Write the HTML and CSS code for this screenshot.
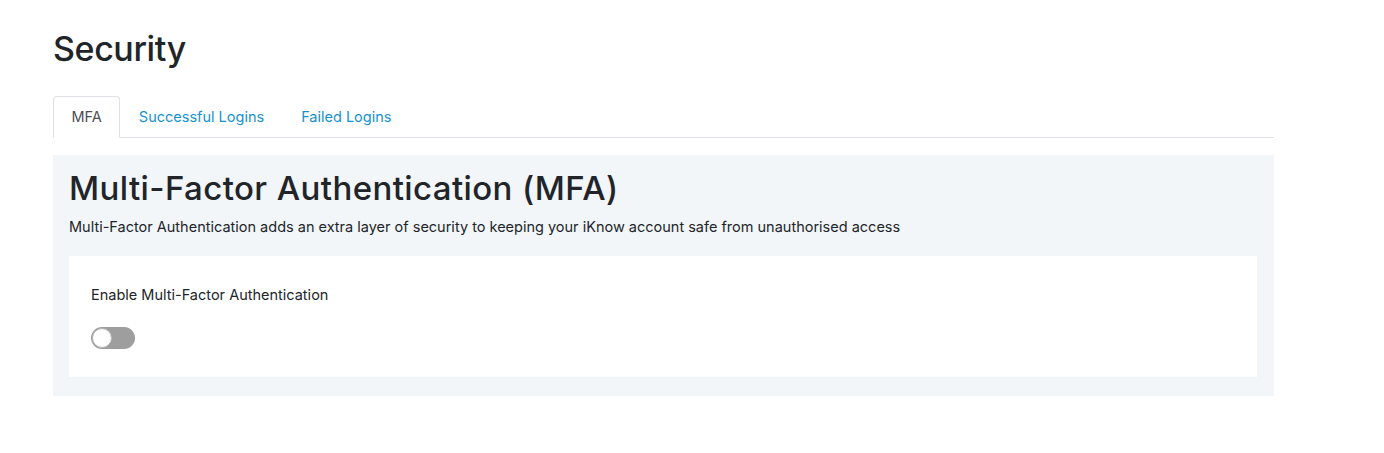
FILE: index.html
```html
<!DOCTYPE html>
<html>
<head>
<meta charset="utf-8">
<link rel="stylesheet" href="styles.css">
</head>
<body>
<main class="page">
  <h1 class="page-title">Security</h1>
  <ul class="tabs">
    <li class="tab active">MFA</li>
    <li class="tab">Successful Logins</li>
    <li class="tab">Failed Logins</li>
  </ul>
  <section class="panel">
    <h2 class="panel-title">Multi-Factor Authentication (MFA)</h2>
    <p class="panel-desc">Multi-Factor Authentication adds an extra layer of security to keeping your iKnow account safe from unauthorised access</p>
    <div class="card">
      <div class="card-label">Enable Multi-Factor Authentication</div>
      <span class="switch"><span class="knob"></span></span>
    </div>
  </section>
</main>
</body>
</html>
```
FILE: styles.css
```css
* { box-sizing: border-box; }
html, body { margin: 0; padding: 0; background: #fff; }
body {
  font-family: Inter, "Liberation Sans", Arial, sans-serif;
  color: #212529;
}
.page {
  width: 1221px;
  margin-left: 53px;
  padding-top: 30px;
}
.page-title {
  margin: 0;
  font-size: 34px;
  font-weight: 500;
  line-height: 38px;
  letter-spacing: -0.4px;
}
.tabs {
  list-style: none;
  margin: 28px 0 0;
  padding: 0;
  display: flex;
  border-bottom: 1px solid #dee2e6;
}
.tab {
  padding: 10px 17.5px 10px 17.5px;
  font-size: 14.5px;
  line-height: 20px;
  color: #1592d0;
  border: 1px solid transparent;
  border-top-left-radius: 4px;
  border-top-right-radius: 4px;
  margin-bottom: -1px;
}
.tab.active {
  color: #495057;
  background: #fff;
  border-color: #dee2e6 #dee2e6 #fff;
}
.panel {
  margin-top: 17px;
  background: #f3f6f9;
  padding: 14px 17px 19px 16px;
}
.panel-title {
  margin: 0;
  font-size: 33px;
  font-weight: 500;
  line-height: 38px;
  letter-spacing: 0.4px;
}
.panel-desc {
  margin: 9px 0 0;
  font-size: 14.5px;
  line-height: 21px;
}
.card {
  margin-top: 19px;
  background: #fff;
  padding: 29px 22px 28px;
}
.card-label {
  font-size: 14.5px;
  line-height: 20px;
}
.switch {
  display: block;
  margin-top: 22px;
  width: 44px;
  height: 22px;
  border-radius: 11px;
  background: #9e9e9e;
  position: relative;
}
.knob {
  position: absolute;
  left: 1px;
  top: 1px;
  width: 20px;
  height: 20px;
  border-radius: 50%;
  background: #fff;
  border: 1px solid #b5b5b5;
}
```
